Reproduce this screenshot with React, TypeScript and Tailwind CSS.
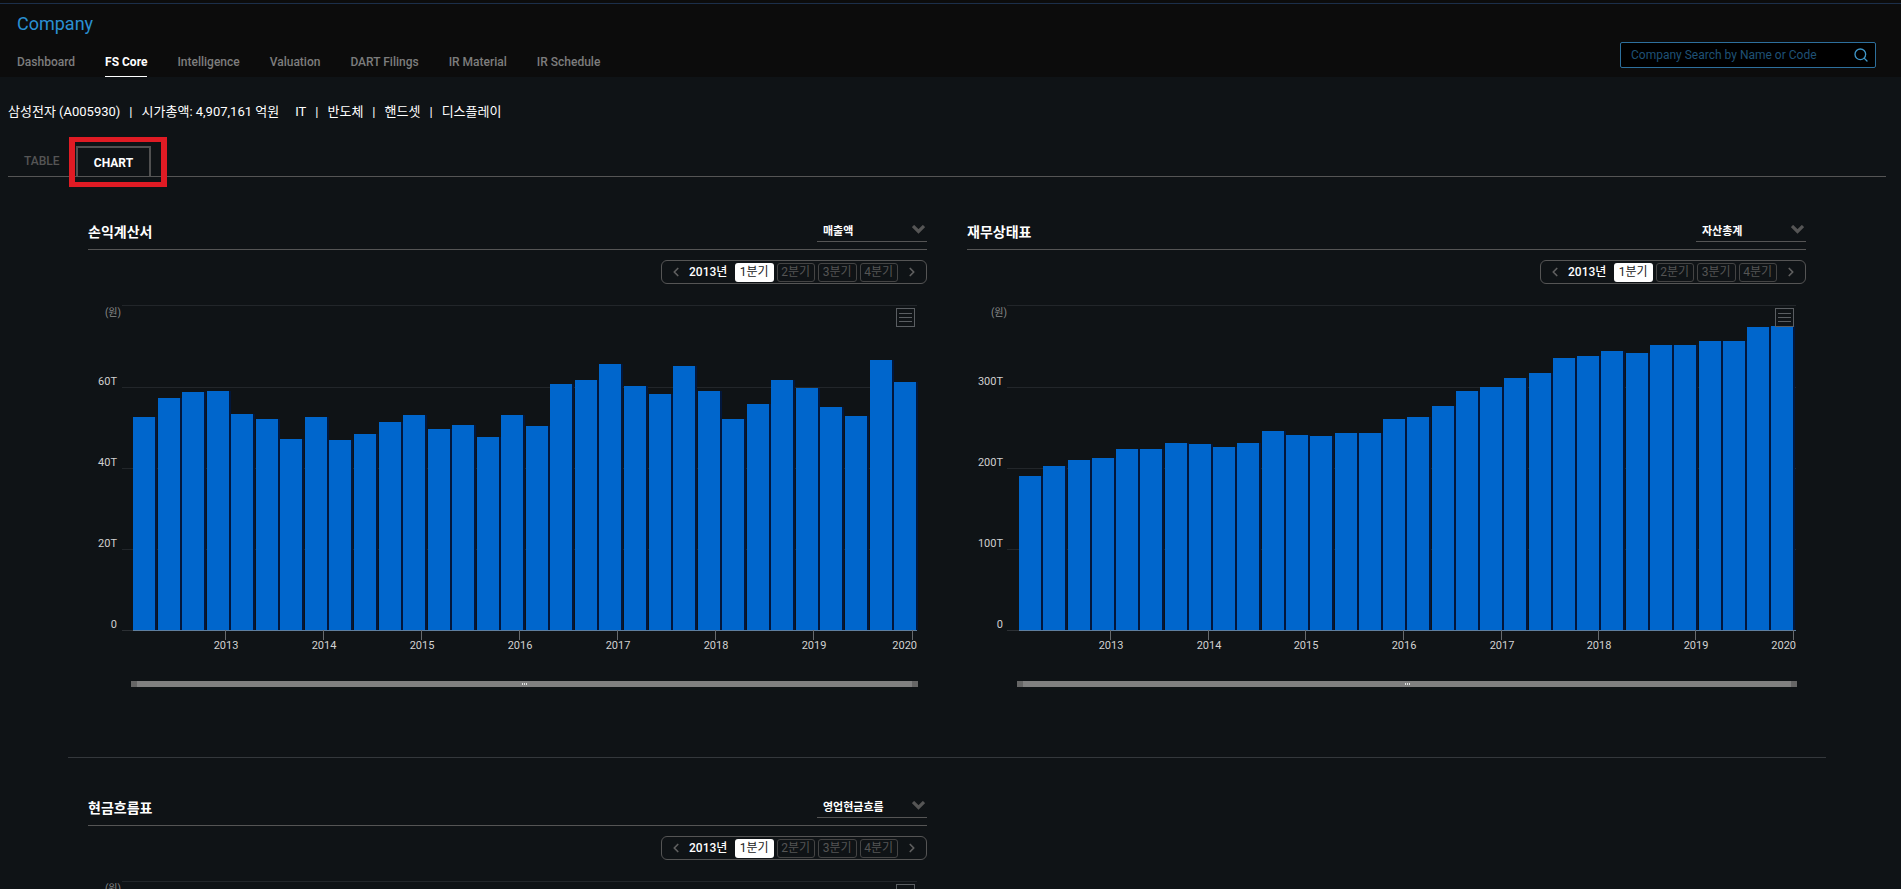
import type { ReactNode } from "react";
import { ChevronLeft, ChevronRight, Search } from "lucide-react";

const navItems = ["Dashboard", "FS Core", "Intelligence", "Valuation", "DART Filings", "IR Material", "IR Schedule"];

// bar tops in page pixels, axis sits at y=630
const incomeTops = [417, 398, 392, 391, 414, 419, 439, 417, 440, 434, 422, 415, 429, 425, 437, 415, 426, 384, 380, 364, 386, 394, 366, 391, 419, 404, 380, 388, 407, 416, 360, 382];
const balanceTops = [476, 466, 460, 458, 449, 449, 443, 444, 447, 443, 431, 435, 436, 433, 433, 419, 417, 406, 391, 387, 378, 373, 358, 356, 351, 353, 345, 345, 341, 341, 327, 326];

const years = ["2013", "2014", "2015", "2016", "2017", "2018", "2019", "2020"];

type ChartProps = {
  tops: number[];
  yLabels: string[];
  gridLeft: number;
  labelRight: number;
  barLeft: number;
  pitch: number;
  ticks: number[];
  scrollLeft: number;
};

function Chart({ tops, yLabels, gridLeft, labelRight, barLeft, pitch, ticks, scrollLeft }: ChartProps) {
  const gridYs = [10.5, 92.5, 173.5, 254.5];
  const axisY = 335;
  const right = 829;
  const grip = Math.round((scrollLeft + right) / 2) + 1;

  return (
    <svg width="839" height="400" className="block">
      {gridYs.map((y) => (
        <line key={y} x1={gridLeft} x2={right} y1={y} y2={y} stroke="#22262a" />
      ))}
      <line x1={gridLeft} x2={barLeft} y1={axisY + 0.5} y2={axisY + 0.5} stroke="#2c3034" />
      {tops.map((top, i) => {
        const x = Math.round(barLeft + i * pitch);
        const y = top - 295;
        return (
          <g key={i}>
            <rect x={x + 22} y={y} width={2} height={axisY - y} fill="#02173c" />
            <rect x={x} y={y} width={22} height={axisY - y} fill="#0066cc" />
          </g>
        );
      })}
      <line x1={barLeft} x2={right} y1={axisY + 0.5} y2={axisY + 0.5} stroke="#5f7f9f" />
      <text x={labelRight + 4} y={21} textAnchor="end" fontSize="10" fill="#8a8a8a">(원)</text>
      {yLabels.map((label, i) => (
        <text key={label} x={labelRight} y={i === 3 ? 333 : 90 + i * 81} textAnchor="end" fontSize="11" fill="#cfcfcf">
          {label}
        </text>
      ))}
      {ticks.map((x, i) => (
        <g key={x}>
          <line x1={x + 0.5} x2={x + 0.5} y1={axisY} y2={345} stroke="#666a6e" />
          <text
            x={i === ticks.length - 1 ? right : x + 1}
            y={354}
            textAnchor={i === ticks.length - 1 ? "end" : "middle"}
            fontSize="11"
            fill="#d2d2d2"
          >
            {years[i]}
          </text>
        </g>
      ))}
      <rect x={scrollLeft} y={386} width={right + 1 - scrollLeft} height={6} fill="#808080" />
      <rect x={scrollLeft} y={386} width={6} height={6} fill="#666666" />
      <rect x={right - 5} y={386} width={6} height={6} fill="#666666" />
      <rect x={grip - 3} y={388} width={1} height={2} fill="#e0e0e0" />
      <rect x={grip - 1} y={388} width={1} height={2} fill="#e0e0e0" />
      <rect x={grip + 1} y={388} width={1} height={2} fill="#e0e0e0" />
      {/* export menu */}
      <g stroke="#5a5e62" fill="none">
        <rect x={right - 20.5} y={13.5} width={18} height={18} />
        <line x1={right - 18} x2={right - 5} y1={18.5} y2={18.5} />
        <line x1={right - 18} x2={right - 5} y1={22.5} y2={22.5} />
        <line x1={right - 18} x2={right - 5} y1={26.5} y2={26.5} />
      </g>
    </svg>
  );
}

function YearControl() {
  return (
    <div className="mt-[10px] ml-auto flex h-6 w-[266px] items-center rounded-md border border-[#555] pl-[7px] text-[12px]">
      <ChevronLeft size={14} strokeWidth={3} className="text-[#5f5f5f]" />
      <span className="ml-[6px] w-[38px] text-[12px] font-medium whitespace-nowrap text-white">2013년</span>
      <div className="ml-2 flex gap-[3px]">
        <span className="flex h-[19px] w-[38.5px] items-center justify-center rounded-[3px] bg-white text-[#222]">1분기</span>
        {["2분기", "3분기", "4분기"].map((q) => (
          <span key={q} className="flex h-[19px] w-[38.5px] items-center justify-center rounded-[3px] border border-[#444] text-[#555]">
            {q}
          </span>
        ))}
      </div>
      <ChevronRight size={14} strokeWidth={3} className="ml-[7px] text-[#5f5f5f]" />
    </div>
  );
}

function Panel({ title, select, children }: { title: string; select: string; children?: ReactNode }) {
  return (
    <div className="w-[839px]">
      <div className="flex h-[30px] items-end justify-between border-b border-[#555]">
        <h2 className="mb-[6px] text-[14px] leading-[22px] font-bold text-white">{title}</h2>
        <div className="mb-[7px] flex h-[22px] w-[110px] items-center justify-between border-b border-[#555] pr-[2px] pl-[6px]">
          <span className="pt-[3px] text-[11px] font-bold text-white">{select}</span>
          <svg width="13" height="9" viewBox="0 0 13 9" className="mb-[3px]">
            <polyline points="1,1 6.5,6.5 12,1" fill="none" stroke="#555" strokeWidth="3.2" />
          </svg>
        </div>
      </div>
      <YearControl />
      <div className="mt-[11px]">{children}</div>
    </div>
  );
}

export default function App() {
  return (
    <div className="h-screen overflow-hidden bg-[#0f1316] font-[Roboto,'Noto_Sans_CJK_KR',sans-serif]">
      <header className="flex h-[77px] flex-col bg-[#0c0c0c]">
        <div className="mt-[3px] h-px shrink-0 bg-[#1c2f4a]" />
        <div className="flex flex-1 justify-between pr-[25px] pl-[17px]">
          <div className="flex flex-col justify-between">
            <div className="mt-[9px] text-[18px] leading-[22px] text-[#2a90d2]">Company</div>
            <nav className="flex gap-[30px]">
              {navItems.map((item) =>
                item === "FS Core" ? (
                  <a key={item} className="border-b border-white pb-[6px] text-[12px] leading-[16px] font-bold text-white">
                    {item}
                  </a>
                ) : (
                  <a key={item} className="pb-[7px] text-[12px] leading-[16px] font-medium text-[#7d7d7d]">
                    {item}
                  </a>
                ),
              )}
            </nav>
          </div>
          <div className="mb-[9px] flex h-[26px] w-[256px] items-center justify-between self-end rounded-[2px] border border-[#2d6f9c] bg-black pr-[6px] pl-[10px]">
            <span className="text-[12px] text-[#1f5175]">Company Search by Name or Code</span>
            <Search size={16} strokeWidth={2} className="text-[#3f97c9]" />
          </div>
        </div>
      </header>

      <div className="flex h-[69px] items-center pl-[8px] text-[13px] whitespace-nowrap text-white">
        <span>삼성전자 (A005930)</span>
        <span className="mx-[9px]">|</span>
        <span>시가총액: 4,907,161 억원</span>
        <span className="ml-[16px]">IT</span>
        <span className="mx-[9px]">|</span>
        <span>반도체</span>
        <span className="mx-[9px]">|</span>
        <span>핸드셋</span>
        <span className="mx-[9px]">|</span>
        <span>디스플레이</span>
      </div>

      <div className="relative mr-[15px] ml-[8px] flex h-[31px] items-stretch border-b border-[#555]">
        <a className="ml-[16px] flex w-[52px] items-center text-[12px] font-medium text-[#555]">TABLE</a>
        <a className="flex w-[75px] items-center justify-center border-t-2 border-r-2 border-l-2 border-[#505050] pt-[2px] text-[12px] font-bold text-white">CHART</a>
        <div className="absolute top-[-9px] left-[61px] h-[50px] w-[98px] border-x-[6px] border-y-[5px] border-[#e01b24]" />
      </div>

      <main className="mx-[68px] w-[1758px]">
        <div className="flex justify-between border-b border-[#34383c] px-5 pt-[43px] pb-[62px]">
          <Panel title="손익계산서" select="매출액">
            <Chart
              tops={incomeTops}
              yLabels={["60T", "40T", "20T", "0"]}
              gridLeft={34}
              labelRight={29}
              barLeft={45}
              pitch={24.55}
              ticks={[137, 235, 333, 431, 529, 627, 725, 824]}
              scrollLeft={43}
            />
          </Panel>
          <Panel title="재무상태표" select="자산총계">
            <Chart
              tops={balanceTops}
              yLabels={["300T", "200T", "100T", "0"]}
              gridLeft={40}
              labelRight={36}
              barLeft={52}
              pitch={24.27}
              ticks={[143, 241, 338, 436, 534, 631, 728, 826]}
              scrollLeft={50}
            />
          </Panel>
        </div>
        <div className="px-5 pt-[38px]">
          <Panel title="현금흐름표" select="영업현금흐름">
            <Chart
              tops={incomeTops}
              yLabels={["60T", "40T", "20T", "0"]}
              gridLeft={34}
              labelRight={29}
              barLeft={45}
              pitch={24.55}
              ticks={[137, 235, 333, 431, 529, 627, 725, 824]}
              scrollLeft={43}
            />
          </Panel>
        </div>
      </main>
    </div>
  );
}
